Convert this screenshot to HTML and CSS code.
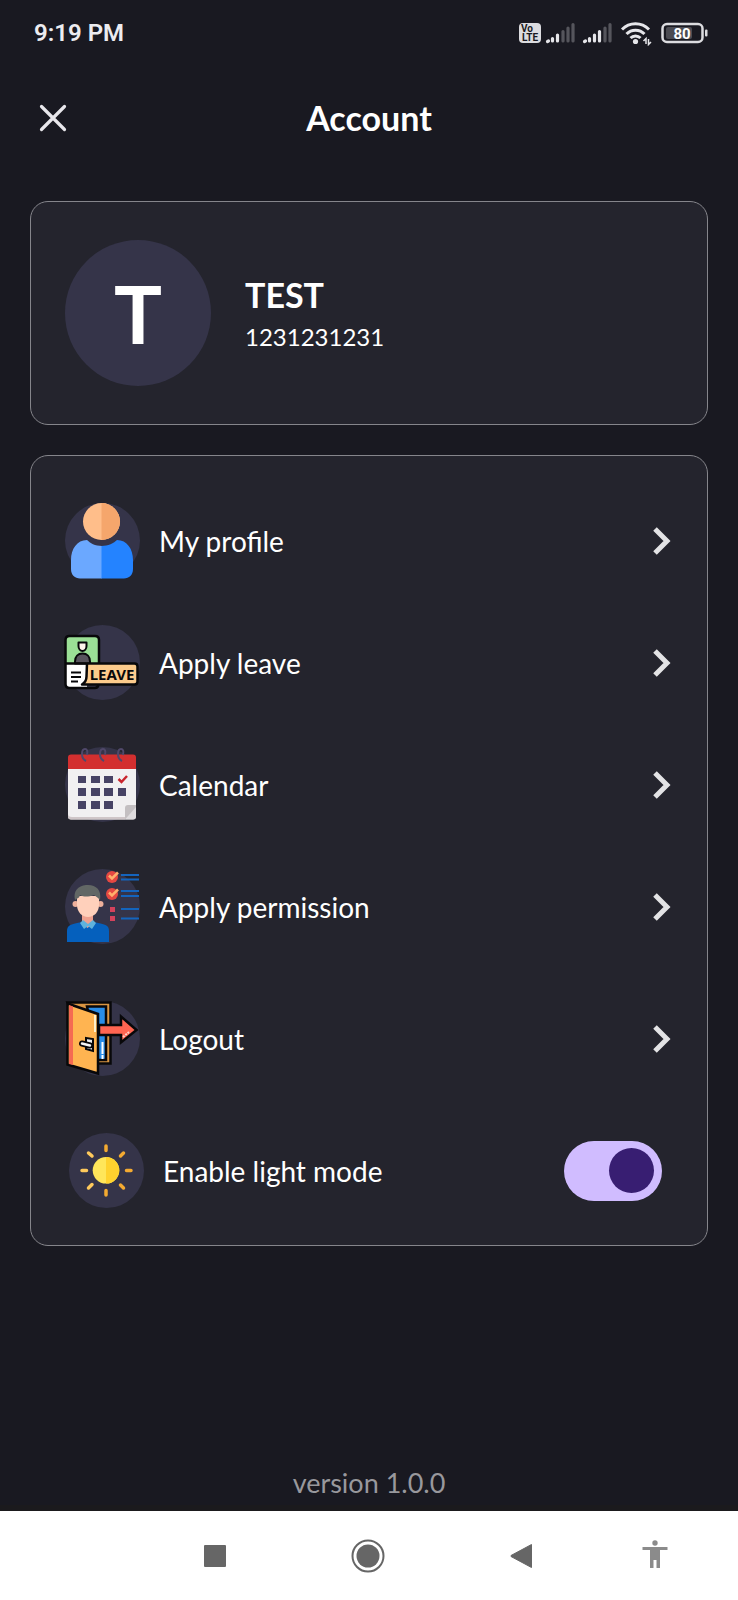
FILE: index.html
```html
<!DOCTYPE html>
<html lang="en">
<head>
<meta charset="utf-8">
<meta name="viewport" content="width=device-width, initial-scale=1">
<title>Account</title>
<link rel="stylesheet" href="styles.css">
</head>
<body>
<div class="status-bar">
  <span class="time">9:19 PM</span>
  <svg class="status-icons" viewBox="0 0 190 26" width="190" height="26" aria-hidden="true">
    <rect x="1" y="3" width="22" height="20" rx="4" fill="#dcdce0"/>
    <text class="lte" x="3" y="12">Vo</text>
    <text class="lte" x="4" y="21">LTE</text>
    <g stroke-width="3.2" stroke-linecap="round">
      <g stroke="#e6e6ea"><path d="M29.500 21.500l1-.5M34.500 21v-2.500M39.500 21V15"/><path d="M66.500 21.500l1-.5M71.500 21v-2.500M76.500 21v-6M81.500 21V11.500"/></g>
      <g stroke="#55555c"><path d="M45 21V11.500M50 21V8M55 21V4.500"/><path d="M87 21V8M92 21V4.500"/></g>
    </g>
    <g fill="none" stroke="#e6e6ea" stroke-width="3">
      <path d="M104 9.500a19 19 0 0 1 27 0M108.500 14a12.500 12.500 0 0 1 18 0M112.500 18a7 7 0 0 1 10 0"/>
    </g>
    <circle cx="117.500" cy="21.500" r="2.600" fill="#e6e6ea"/>
    <path d="M125.500 21l2.500-2.500V24M133 22l-2.500 2.500V19" fill="none" stroke="#e6e6ea" stroke-width="1.500"/>
    <rect x="144.500" y="4" width="40" height="18" rx="4.500" fill="none" stroke="#dcdce0" stroke-width="2.500"/>
    <rect x="148" y="7" width="26" height="12" rx="2" fill="#4b4b52"/>
    <rect x="187" y="9.500" width="2.500" height="7" rx="1" fill="#dcdce0"/>
    <text class="battery" x="164" y="18.500">80</text>
  </svg>
</div>

<header class="app-bar">
  <button class="close" type="button" aria-label="Close">
    <svg viewBox="0 0 28 28" width="28" height="28" fill="none" stroke="#e8e7ec" stroke-width="3.200" stroke-linecap="round"><path d="M2.500 2.500l23 23M25.500 2.500l-23 23"/></svg>
  </button>
  <h1 class="title">Account</h1>
</header>

<main class="content">
  <section class="card profile">
    <div class="avatar">T</div>
    <div class="identity">
      <h2 class="name">TEST</h2>
      <p class="phone">1231231231</p>
    </div>
  </section>

  <nav class="card menu">
    <a class="row" href="#profile">
      <span class="icon"><svg viewBox="15 17 75 75">
        <circle cx="51.500" cy="35.500" r="18.500" fill="#ffbe8a"/><path d="M51.500 17a18.500 18.500 0 0 1 0 37z" fill="#f5a66c"/>
        <path d="M52 60C45 60 40 57 37 54C27 54 21 63 21 74v9c0 6 4 9.500 9 9.500h22z" fill="#6ba8ff"/>
        <path d="M51.500 60C58 60 64 57 67 54C77 54 83 63 83 74v9c0 6-4 9.500-9 9.500H51.500z" fill="#2483ff"/>
      </svg></span>
      <span class="label">My profile</span>
      <svg class="chevron" viewBox="0 0 18 28"><path d="M2 2L14 14 2 26"/></svg>
    </a>
    <a class="row" href="#leave">
      <span class="icon"><svg viewBox="10 10 75 75" stroke-linejoin="round">
        <path d="M10.500 49V25q0-4 4-4H40q4 0 4 4v24z" fill="#9be096"/>
        <path d="M10.500 49H32v24H14.500q-4 0-4-4z" fill="#fff"/>
        <path d="M20 48.500v-2c0-5 3-8 7.500-8s7.500 3 7.500 8v2z" fill="#58545d" stroke="#08080a" stroke-width="2"/>
        <path d="M23.500 27.500h8V31c0 3-2 5-4 5s-4-2-4-5z" fill="#fff4ec" stroke="#08080a" stroke-width="2"/>
        <path d="M44 48V25q0-4-4-4H14.500q-4 0-4 4v44q0 4 4 4H40q2.500 0 3.500-3M10.500 48.500H31" fill="none" stroke="#08080a" stroke-width="2.500"/>
        <path d="M16 57.500h10M16 62h10M16 66.500h7" stroke="#08080a" stroke-width="2"/>
        <path d="M32 48.500h47.500q3 0 3 3v15q0 3-3 3H27q4.500-3 4.500-8z" fill="#fccb8c" stroke="#08080a" stroke-width="2.500"/>
        <text class="leave" x="57" y="65">LEAVE</text>
      </svg></span>
      <span class="label">Apply leave</span>
      <svg class="chevron" viewBox="0 0 18 28"><path d="M2 2L14 14 2 26"/></svg>
    </a>
    <a class="row" href="#calendar">
      <span class="icon"><svg viewBox="10 10 75 75">
        <path d="M13 31h68v37L70 82.500H16q-3 0-3-3z" fill="#f1f0f1"/>
        <path d="M13 77v2.500q0 3 3 3h54l1-2.500H17q-4 0-4-3z" fill="#cfc6c8"/>
        <path d="M13 32V20.500q0-3 3-3h62q3 0 3 3V32z" fill="#d32f2f"/>
        <path d="M81 68v11.500q0 3-3 3h-8V71q0-3 3-3z" fill="#c3bfc1"/><path d="M81 70v9.500q0 3-3 3h-8z" fill="#dedbdd"/>
        <g fill="none" stroke="#50486a" stroke-width="2"><path d="M31 24q-4-2-4-7c0-3 1-5 3-5s3 2 2 6M49 24q-4-2-4-7c0-3 1-5 3-5s3 2 2 6M67 24q-4-2-4-7c0-3 1-5 3-5s3 2 2 6"/></g>
        <g fill="#474365"><path d="M23 39h8v7h-8zM36 39h9v7h-9zM49 39h9v7h-9zM23 51h8v8h-8zM36 51h9v8h-9zM49 51h9v8h-9zM63 51h8v8h-8zM23 64h8v8h-8zM36 64h9v8h-9zM49 64h9v8h-9z"/></g>
        <path d="M63.500 42l3 3 5.500-6" fill="none" stroke="#c9252d" stroke-width="2.500"/>
      </svg></span>
      <span class="label">Calendar</span>
      <svg class="chevron" viewBox="0 0 18 28"><path d="M2 2L14 14 2 26"/></svg>
    </a>
    <a class="row" href="#permission">
      <span class="icon"><svg viewBox="10 11 75 75">
        <path d="M12 84V73c0-6 4-7 15-9h11c12 2 16 3 16 9v11z" fill="#0560bd"/>
        <path d="M27 56h11v9l-5.500 5-5.500-5z" fill="#efa18f"/>
        <path d="M25 65l3-3 5 4 5-4 3 3-4 6-4-3-4 3z" fill="#5fb2dc"/>
        <circle cx="20.500" cy="46" r="3" fill="#eeb09b"/><circle cx="45.500" cy="46" r="3" fill="#eeb09b"/>
        <path d="M22 38h22v9c0 7-5 12-11 12s-11-5-11-12z" fill="#ffd0bb"/>
        <path d="M20 42c-2-9 3-14 11-15 9-1 16 4 14 15l-2-2-4-3c-6 2-10 2-14 0-1 4-3 3-5 5z" fill="#626765"/>
        <g fill="#e54842"><circle cx="57" cy="19" r="6"/><circle cx="57" cy="36" r="6"/></g>
        <g fill="#d4425c"><path d="M55 49h5v5h-5zM55 58h5v5h-5z"/></g>
        <path d="M54 17.500l3 3 6-6M54 34.500l3 3 6-6" fill="none" stroke="#ffb06c" stroke-width="2.500"/>
        <path d="M66 17h18M66 21.500h18M66 33h18M66 38h18M66 51h18M66 60.500h18" stroke="#1464bd" stroke-width="2"/>
      </svg></span>
      <span class="label">Apply permission</span>
      <svg class="chevron" viewBox="0 0 18 28"><path d="M2 2L14 14 2 26"/></svg>
    </a>
    <a class="row spaced" href="#logout">
      <span class="icon"><svg viewBox="10 16 75 75" stroke="#08080a" stroke-width="2.500">
        <path d="M12.500 17.500h43v61H43z" fill="#d99542"/>
        <path d="M32 21.500h19V75h-8z" fill="#298de8"/>
        <path d="M47.500 57v17" stroke="#fff" stroke-width="2" stroke-dasharray="12 1"/>
        <path d="M12.500 18.500L43 29v59.500l-30.500-9z" fill="#ffb451"/>
        <path d="M14 20l4 1.500V80l-4-1z" fill="#f56a52" stroke="none"/>
        <path d="M40 30v17" stroke="#fff2cc" stroke-width="2"/>
        <path d="M44 40h22v-8.500L81.500 45 66 57.500V50H44z" fill="#ff6551"/>
        <path d="M68 52l6-5" stroke="#ffd0c8" stroke-width="2" stroke-dasharray="2 1"/>
        <path d="M31 53l7 1v12l-7-2z" fill="#e9edf0" stroke-width="2"/>
        <path d="M27 58.500l8 2" stroke-width="6" stroke-linecap="round"/><path d="M27 58.500l8 2" stroke="#f4f5f6" stroke-width="2.500" stroke-linecap="round"/>
      </svg></span>
      <span class="label">Logout</span>
      <svg class="chevron" viewBox="0 0 18 28"><path d="M2 2L14 14 2 26"/></svg>
    </a>
    <label class="row spaced toggle-row">
      <span class="icon"><svg viewBox="14 13 75 75">
        <circle cx="51" cy="50.300" r="13.300" fill="#ffe65a"/><path d="M51 37a13.300 13.300 0 0 1 0 26.600z" fill="#ffd22e"/>
        <g stroke-width="3.500" stroke-linecap="round"><path d="M51 26v4.500M51 70.500V75M65.500 36l3-3M65.500 65l3 3M71.500 50.500H76" stroke="#f4aa31"/><path d="M33.500 33l3.500 3M27 50.500h4.500M33.500 68l3.500-3.500" stroke="#ffca5c"/></g>
      </svg></span>
      <span class="label">Enable light mode</span>
      <input class="switch" type="checkbox" role="switch" checked>
    </label>
  </nav>
</main>

<footer class="version">version 1.0.0</footer>

<div class="system-nav">
  <button type="button" aria-label="Recent apps"><svg viewBox="0 0 36 36"><rect x="7" y="7" width="22" height="22" rx="1" fill="#666"/></svg></button>
  <button type="button" aria-label="Home"><svg viewBox="0 0 36 36"><circle cx="18" cy="18" r="15.500" fill="none" stroke="#666" stroke-width="2"/><circle cx="18" cy="18" r="11.500" fill="#666"/></svg></button>
  <button type="button" aria-label="Back"><svg viewBox="0 0 36 36"><path d="M28.500 6.500v23L8 18.500v-1z" fill="#666" stroke="#666" stroke-linejoin="round"/></svg></button>
  <button type="button" aria-label="Accessibility"><svg viewBox="0 0 36 36" fill="#8b8b8b"><circle cx="18" cy="5" r="2.700"/><path d="M5.500 9h25v3H23v18h-3.500v-8h-3v8H13V12H5.500z"/></svg></button>
</div>
</body>
</html>
```

FILE: styles.css
```css
* { box-sizing: border-box; }

body {
  margin: 0;
  min-height: 100vh;
  display: flex;
  flex-direction: column;
  background: #191921;
  color: #fff;
  font-family: Lato, "Noto Sans", sans-serif;
}

h1, h2, p { margin: 0; }

button {
  border: 0;
  padding: 0;
  background: none;
  cursor: pointer;
}

svg { display: block; }

.status-bar {
  display: flex;
  justify-content: space-between;
  align-items: center;
  height: 66px;
  padding: 0 30px 0 34px;
}

.time {
  font: 600 24px/28px Roboto, sans-serif;
  color: #ececf0;
}

.lte {
  font: 700 10px Roboto, sans-serif;
  fill: #191921;
}

.battery {
  font: 700 15px Roboto, sans-serif;
  fill: #fff;
  text-anchor: middle;
}

.leave {
  font: 700 15px "Noto Sans", sans-serif;
  fill: #08080a;
  text-anchor: middle;
}

.app-bar {
  display: grid;
  grid-template-columns: 28px 1fr 28px;
  align-items: center;
  height: 104px;
  padding: 0 39px;
}

.title {
  font-size: 34px;
  line-height: 44px;
  text-align: center;
}

.content {
  display: flex;
  flex-direction: column;
  gap: 30px;
  padding: 31px 30px 0;
}

.card {
  border: 1px solid #85858b;
  border-radius: 18px;
  background: #24242d;
}

.profile {
  display: flex;
  align-items: center;
  gap: 34px;
  padding: 38px 34px;
}

.avatar {
  display: grid;
  place-items: center;
  width: 146px;
  height: 146px;
  border-radius: 50%;
  background: #353449;
  font-size: 80px;
  font-weight: 700;
}

.identity { padding-top: 4px; }

.name {
  font-size: 34px;
  line-height: 44px;
}

.phone {
  font-size: 24px;
  line-height: 40px;
}

.menu {
  display: flex;
  flex-direction: column;
  gap: 47px;
  padding: 47px 36px 37px 34px;
}

.row {
  display: flex;
  align-items: center;
  gap: 19px;
  color: inherit;
  text-decoration: none;
  cursor: pointer;
}

.spaced { margin-top: 10px; }

.toggle-row { padding: 0 9px 0 4px; }

.icon {
  width: 75px;
  height: 75px;
  border-radius: 50%;
  background: #353449;
}

.icon svg {
  width: 75px;
  height: 75px;
  overflow: visible;
}

.label {
  flex: 1;
  font-size: 28px;
  line-height: 36px;
}

.chevron {
  width: 18px;
  height: 28px;
  overflow: visible;
  fill: none;
  stroke: #e3e3e5;
  stroke-width: 5;
}

.switch {
  appearance: none;
  display: flex;
  align-items: center;
  width: 98px;
  height: 60px;
  margin: 0;
  padding: 0 8px;
  border-radius: 30px;
  background: #d0bcff;
  cursor: pointer;
}

.switch::before {
  content: "";
  width: 45px;
  height: 45px;
  border-radius: 50%;
  background: #381e72;
}

.switch:checked { justify-content: flex-end; }

.version {
  margin-top: auto;
  padding: 16px 0 4px;
  border-bottom: 6px solid #1b1a1d;
  color: #98989d;
  font-size: 27px;
  line-height: 36px;
  text-align: center;
}

.system-nav {
  display: grid;
  grid-template-columns: 4fr 4fr 4fr 3fr;
  align-items: center;
  justify-items: center;
  height: 89px;
  padding: 0 26px 0 139px;
  background: #fff;
}

.system-nav svg {
  width: 36px;
  height: 36px;
}
```
